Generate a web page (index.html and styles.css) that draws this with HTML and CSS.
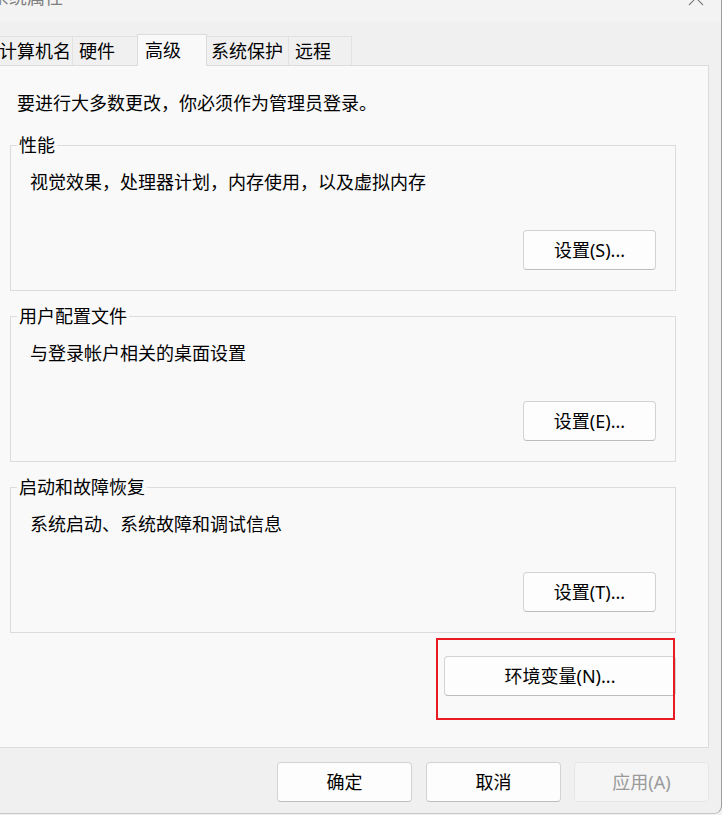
FILE: index.html
```html
<!DOCTYPE html>
<html lang="zh-CN">
<head>
<meta charset="utf-8">
<title>系统属性</title>
<link rel="stylesheet" href="styles.css">
</head>
<body>
<div class="window">
  <div class="titlebar">
    <span class="title">系统属性</span>
    <svg class="close" width="16" height="16" viewBox="0 0 16 16"><path d="M1 1 L15 15 M15 1 L1 15" stroke="#7c7c7c" stroke-width="1.1" fill="none"/></svg>
  </div>
  <div class="tabstrip">
    <div class="tab t1">计算机名</div>
    <div class="tab t2">硬件</div>
    <div class="tab t3 active">高级</div>
    <div class="tab t4">系统保护</div>
    <div class="tab t5">远程</div>
  </div>
  <div class="panel">
    <p class="intro">要进行大多数更改，你必须作为管理员登录。</p>
    <fieldset class="group first">
      <legend>性能</legend>
      <p class="desc">视觉效果，处理器计划，内存使用，以及虚拟内存</p>
      <div class="btnrow"><button class="btn set">设置(S)...</button></div>
    </fieldset>
    <fieldset class="group">
      <legend>用户配置文件</legend>
      <p class="desc">与登录帐户相关的桌面设置</p>
      <div class="btnrow"><button class="btn set">设置(E)...</button></div>
    </fieldset>
    <fieldset class="group">
      <legend>启动和故障恢复</legend>
      <p class="desc">系统启动、系统故障和调试信息</p>
      <div class="btnrow"><button class="btn set">设置(T)...</button></div>
    </fieldset>
    <div class="envrow"><button class="btn env">环境变量(N)...</button></div>
  </div>
  <div class="footer">
    <button class="btn foot">确定</button>
    <button class="btn foot">取消</button>
    <button class="btn foot" disabled>应用(A)</button>
  </div>
  <div class="highlight"></div>
</div>
</body>
</html>
```
FILE: styles.css
```css
* { box-sizing: border-box; }
html, body {
  margin: 0;
  padding: 0;
  background: #f0f0f0;
  width: 722px;
  height: 815px;
  overflow: hidden;
}
body {
  font-family: "Noto Sans", "Noto Sans CJK SC", sans-serif;
  font-size: 18px;
  color: #000;
}
.window {
  position: relative;
  width: 722px;
  height: 814px;
  background: #f0f0f0;
  border-right: 1px solid #9d9d9d;
  border-bottom: 1px solid #c8c8c8;
  border-bottom-right-radius: 8px;
  overflow: hidden;
}
.titlebar {
  height: 22px;
  background: #f3f3f3;
  display: flex;
  justify-content: space-between;
  align-items: flex-start;
  overflow: hidden;
}
.title {
  margin-top: -13px;
  margin-left: -9px;
  line-height: 20px;
  color: #808080;
  white-space: nowrap;
}
.close {
  margin-top: -10px;
  margin-right: 17px;
}
.tabstrip {
  height: 44px;
  display: flex;
  align-items: flex-end;
  margin-left: -8px;
}
.tab {
  height: 29px;
  margin-bottom: 1px;
  border: 1px solid #e2e2e2;
  border-bottom: none;
  background: #f0f0f0;
  line-height: 28px;
  padding-left: 6px;
  white-space: nowrap;
  margin-left: -1px;
}
.t1 { width: 81px; margin-left: 0; }
.t2 { width: 67px; }
.t3 { width: 70px; margin-left: -2px; padding-left: 7px; }
.t4 { width: 83px; margin-left: -1px; padding-left: 4px; }
.t5 { width: 64px; }
.tab.active {
  position: relative;
  z-index: 1;
  height: 32px;
  margin-bottom: 0;
  background: #f9f9f9;
  border-color: #dcdcdc;
  line-height: 30px;
}
.panel {
  margin-top: -1px;
  margin-left: -10px;
  width: 719px;
  height: 683px;
  background: #f9f9f9;
  border: 1px solid #dcdcdc;
  padding: 27px 0 0 19px;
}
.intro {
  margin: 0;
  padding-left: 7px;
  line-height: 20px;
  white-space: nowrap;
}
.group {
  width: 666px;
  margin: 15px 0 0 0;
  border: 1px solid #dcdcdc;
  padding: 0 19px 20px 6px;
  min-inline-size: 0;
}
.group.first { margin-top: 22px; }
.group legend {
  padding: 0 2px;
  line-height: 20px;
}
.desc {
  margin: 17px 0 0 0;
  padding-left: 13px;
  line-height: 20px;
}
.btnrow {
  margin-top: 38px;
  display: flex;
  justify-content: flex-end;
}
.btn {
  font-family: inherit;
  font-size: 18px;
  color: #000;
  height: 40px;
  background: #fdfdfd;
  border: 1px solid #d3d3d3;
  border-bottom-color: #bdbdbd;
  border-radius: 4px;
  padding: 0;
  line-height: 38px;
}
.set { width: 133px; }
.envrow {
  width: 666px;
  margin-top: 23px;
  display: flex;
  justify-content: flex-end;
}
.env { width: 232px; }
.footer {
  display: flex;
  justify-content: flex-end;
  gap: 14px;
  padding: 14px 12px 0 0;
}
.foot { width: 135px; }
.foot:last-child { margin-left: -1px; }
.foot:disabled {
  background: #f5f5f5;
  border-color: #e6e6e6;
  color: #9a9a9a;
}
.highlight {
  position: absolute;
  left: 436px;
  top: 638px;
  width: 239px;
  height: 82px;
  border: 2px solid #e81b23;
  pointer-events: none;
}
```
